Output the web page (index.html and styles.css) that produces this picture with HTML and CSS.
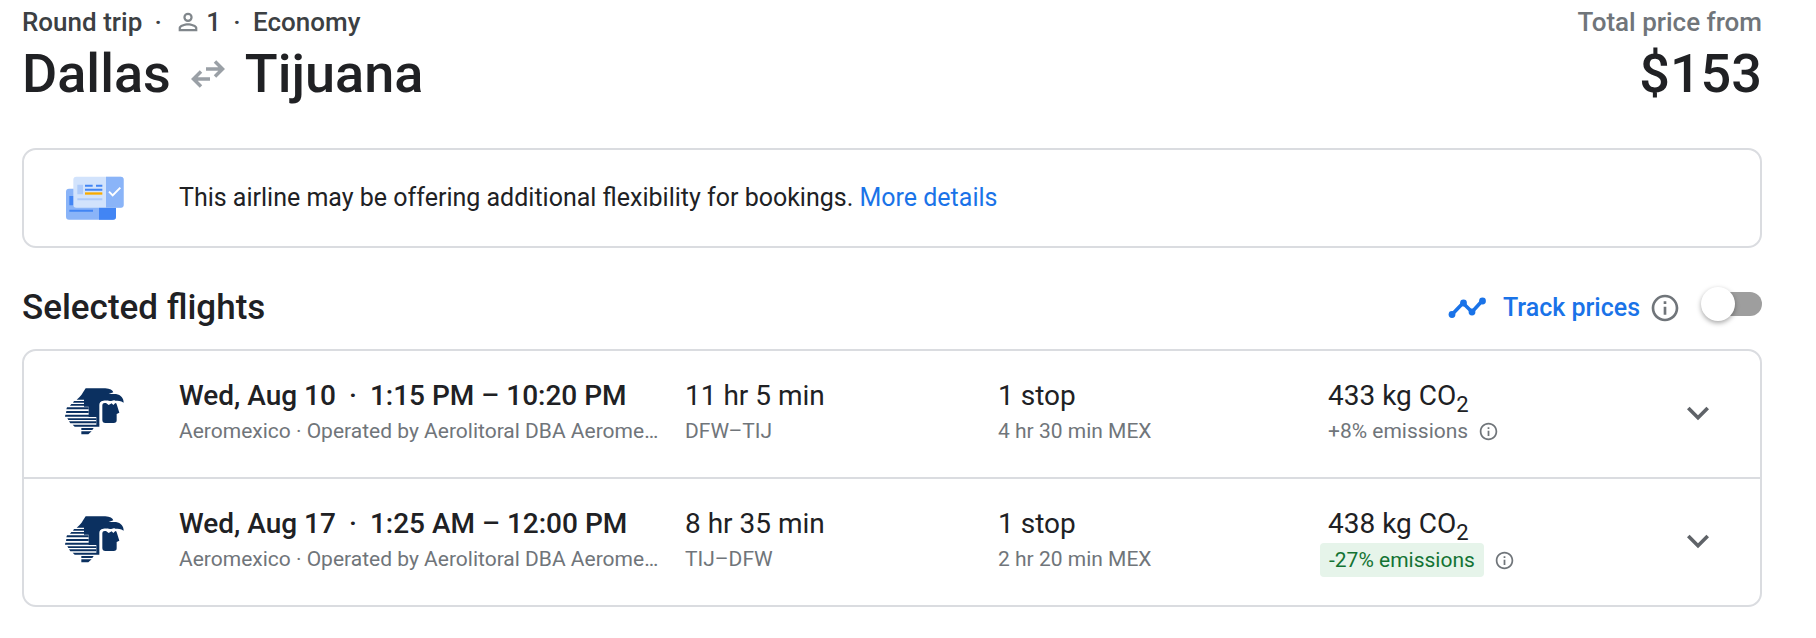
FILE: index.html
```html
<!DOCTYPE html>
<html lang="en">
<head>
<meta charset="utf-8">
<title>Dallas to Tijuana</title>
<link rel="stylesheet" href="styles.css">
</head>
<body>
<svg class="sprite" aria-hidden="true">
  <symbol id="info" viewBox="0 0 24 24"><path d="M11 7h2v2h-2zm0 4h2v6h-2zm1-9C6.480 2 2 6.480 2 12s4.480 10 10 10 10-4.480 10-10S17.520 2 12 2zm0 18c-4.410 0-8-3.590-8-8s3.590-8 8-8 8 3.590 8 8-3.590 8-8 8z"/></symbol>
  <symbol id="chevron" viewBox="0 0 24 24"><path d="M16.590 8.590 12 13.170 7.410 8.590 6 10l6 6 6-6z"/></symbol>
  <symbol id="airline" viewBox="45 50 180 150">
    <path d="M107 54H166C180 55 188 60 190 66L176 71H198C213 73 221 84 221 97C212 91 204 91 196 91C190 87 187 92 180 92C172 91 168 90 160 91C151 92 148 97 148 104V164H139V140H116V109H102V88H80C92 80 98 68 107 54Z"/>
    <path d="M157 104Q157 98 164 98H168L176 104L185 99L190 104L196 98Q200 98 201 105L208 127L200 131V150Q200 158 191 158H166Q157 158 157 149Z"/>
    <path d="M72 92h30v5H69zM64 101h38v5H60zM51 111h65v6H49zM49 122h67v6H48zM46 133h71v6H45zM52 144h87v5H55zM57 153h82v6H61zM68 163h80v6H74zM94 173h37l-4 6H94zM94 183h31l-10 9H94z"/>
  </symbol>
</svg>
<main class="page">
  <header class="trip">
    <div>
      <p class="meta">
        <span>Round trip</span><span class="dot">·</span>
        <span class="people"><svg class="person" viewBox="0 0 24 24" aria-hidden="true"><path d="M12 5.900a2.100 2.100 0 1 1 0 4.200 2.100 2.100 0 0 1 0-4.200m0 9c2.970 0 6.100 1.460 6.100 2.100v1.100H5.900V17c0-.64 3.130-2.100 6.100-2.100M12 4a4 4 0 1 0 0 8 4 4 0 0 0 0-8m0 9c-2.670 0-8 1.340-8 4v3h16v-3c0-2.660-5.330-4-8-4"/></svg>1</span><span class="dot">·</span>
        <span>Economy</span>
      </p>
      <h1 class="route">Dallas
        <svg class="swap" viewBox="0 0 34 28" aria-hidden="true"><path d="M15 9H31M24 1.500l7.500 7.500L24 16.500M19 19H3M10 11.500L2.500 19l7.500 7.500"/></svg>
        Tijuana</h1>
    </div>
    <div class="total">
      <p class="total-label">Total price from</p>
      <p class="price">$153</p>
    </div>
  </header>

  <section class="card notice">
    <svg class="tickets" viewBox="45 45 180 140" aria-hidden="true">
      <rect x="48" y="87" width="150" height="93" rx="9" fill="#8ab4f8"/>
      <path d="M147 140h51v31q0 9-9 9h-42z" fill="#4285f4"/>
      <path d="M58 109h14v28H58zM58 150h71v6H58z" fill="#4285f4"/>
      <rect x="70" y="51" width="151" height="93" rx="9" fill="#d2e3fc"/>
      <path d="M168 51h44q9 0 9 9v75q0 9-9 9h-44z" fill="#8ab4f8"/>
      <path d="M82 75h17v29H82zM82 116h75v6H82z" fill="#aecbfa"/>
      <path d="M105 75h23v6h-23zM138 75h19v6h-19zM105 87h52v6h-52z" fill="#4285f4"/>
      <path d="M105 98h52v7h-52z" fill="#f9ab00"/>
      <path d="M177 96l11 11 23-23" fill="none" stroke="#fff" stroke-width="6"/>
    </svg>
    <p>This airline may be offering additional flexibility for bookings. <a href="#details">More details</a></p>
  </section>

  <div class="section-head">
    <h2>Selected flights</h2>
    <div class="track">
      <svg class="trend" viewBox="0 0 38 22" aria-hidden="true"><path d="M4 17.500 15 6l9 9L34 4" fill="none" stroke="currentColor" stroke-width="3.600"/><g fill="currentColor"><circle cx="4" cy="17.500" r="3.400"/><circle cx="15.500" cy="6" r="3.400"/><circle cx="24" cy="15" r="3.400"/><circle cx="34.500" cy="4" r="3.400"/></g></svg>
      <label for="track">Track prices</label>
      <button class="info-button large" aria-label="About price tracking"><svg aria-hidden="true"><use href="#info"/></svg></button>
      <input class="switch" type="checkbox" role="switch" id="track">
    </div>
  </div>

  <section class="card flights">
    <article class="flight">
      <svg class="logo" role="img" aria-label="Aeromexico"><use href="#airline"/></svg>
      <div class="cell">
        <h3 class="when">Wed, Aug 10<span class="sep">·</span>1:15 PM – 10:20 PM</h3>
        <p class="sub">Aeromexico · Operated by Aerolitoral DBA Aerome…</p>
      </div>
      <div class="cell"><p class="main">11 hr 5 min</p><p class="sub">DFW–TIJ</p></div>
      <div class="cell"><p class="main">1 stop</p><p class="sub">4 hr 30 min MEX</p></div>
      <div class="cell"><p class="main">433 kg CO<sub>2</sub></p>
        <p class="sub emissions"><span>+8% emissions</span><button class="info-button" aria-label="About emissions"><svg aria-hidden="true"><use href="#info"/></svg></button></p></div>
      <button class="expand" aria-label="Show flight details"><svg aria-hidden="true"><use href="#chevron"/></svg></button>
    </article>
    <article class="flight">
      <svg class="logo" role="img" aria-label="Aeromexico"><use href="#airline"/></svg>
      <div class="cell">
        <h3 class="when">Wed, Aug 17<span class="sep">·</span>1:25 AM – 12:00 PM</h3>
        <p class="sub">Aeromexico · Operated by Aerolitoral DBA Aerome…</p>
      </div>
      <div class="cell"><p class="main">8 hr 35 min</p><p class="sub">TIJ–DFW</p></div>
      <div class="cell"><p class="main">1 stop</p><p class="sub">2 hr 20 min MEX</p></div>
      <div class="cell"><p class="main">438 kg CO<sub>2</sub></p>
        <p class="sub emissions"><span class="badge">-27% emissions</span><button class="info-button" aria-label="About emissions"><svg aria-hidden="true"><use href="#info"/></svg></button></p></div>
      <button class="expand" aria-label="Show flight details"><svg aria-hidden="true"><use href="#chevron"/></svg></button>
    </article>
  </section>
</main>
</body>
</html>
```
FILE: styles.css
```css
* { box-sizing: border-box; }
body {
  margin: 0;
  background: #fff;
  color: #202124;
  font-family: Roboto, "Liberation Sans", sans-serif;
}
h1, h2, h3, p { margin: 0; font-weight: 400; }
button { padding: 0; border: 0; background: none; color: inherit; cursor: pointer; }
svg { display: block; flex: none; }
.sprite { position: absolute; width: 0; height: 0; }
.page { padding: 6px 54px 32px 22px; }

.trip { display: flex; justify-content: space-between; }
.meta {
  display: flex;
  align-items: center;
  color: #3c4043;
  font-size: 26px;
  font-weight: 500;
  line-height: 32px;
}
.dot { width: 32px; text-align: center; }
.people { display: flex; align-items: center; gap: 4px; }
.person { width: 28px; height: 28px; fill: #80868b; }
.route {
  display: flex;
  align-items: center;
  gap: 20px;
  font-size: 54px;
  font-weight: 500;
  line-height: 72px;
}
.swap { width: 34px; height: 28px; fill: none; stroke: #9aa0a6; stroke-width: 3.500; }
.total { text-align: right; }
.total-label { color: #70757a; font-size: 26px; font-weight: 500; line-height: 32px; }
.price { font-size: 54px; font-weight: 500; line-height: 72px; }

.card { border: 2px solid #dadce0; border-radius: 14px; }
.notice {
  display: flex;
  align-items: center;
  gap: 54px;
  min-height: 100px;
  margin-top: 38px;
  padding: 0 41px;
  font-size: 25px;
  line-height: 32px;
}
.tickets { width: 60px; height: 48px; }
.notice a { color: #1a73e8; text-decoration: none; }

.section-head {
  display: flex;
  align-items: center;
  justify-content: space-between;
  height: 101px;
  padding-top: 18px;
}
h2 { font-size: 35px; font-weight: 500; line-height: 44px; }
.track {
  display: flex;
  align-items: center;
  color: #1a73e8;
  font-size: 25px;
  font-weight: 500;
  line-height: 32px;
}
.trend { width: 38px; height: 22px; margin-right: 17px; }
.info-button { color: #70757a; }
.info-button svg { width: 21px; height: 21px; fill: currentColor; }
.large { margin: 0 25px 0 9px; }
.large svg { width: 32px; height: 32px; }
.switch {
  position: relative;
  appearance: none;
  width: 56px;
  height: 24px;
  margin: 0 0 8px;
  border-radius: 12px;
  background: #9e9e9e;
}
.switch::before {
  content: "";
  position: absolute;
  top: -5px;
  left: -5px;
  width: 34px;
  height: 34px;
  border-radius: 50%;
  background: #fff;
  box-shadow: 0 2px 5px rgba(0, 0, 0, .35);
}

.flight {
  display: grid;
  grid-template-columns: 114px 506fr 313fr 330fr 308fr 124px;
  height: 126px;
  padding: 26px 0 0 41px;
}
.flight + .flight { height: 128px; border-top: 2px solid #dadce0; }
.logo { width: 60px; height: 50px; margin-top: 10px; fill: #0b3060; }
.cell { min-width: 0; }
.when, .main { font-size: 28px; line-height: 38px; white-space: nowrap; }
.when { font-weight: 500; }
.sep { display: inline-block; width: 34px; text-align: center; }
.main sub { font-size: 22px; line-height: 0; }
.sub {
  color: #70757a;
  font-size: 21px;
  line-height: 32px;
  white-space: nowrap;
}
.emissions { display: flex; align-items: center; gap: 10px; }
.badge {
  margin-left: -8px;
  padding: 0 9px;
  border-radius: 4px;
  background: #e6f4ea;
  color: #137333;
  line-height: 34px;
}
.expand { justify-self: center; align-self: start; margin-top: 14px; color: #5f6368; }
.expand svg { width: 44px; height: 44px; fill: currentColor; }
```
